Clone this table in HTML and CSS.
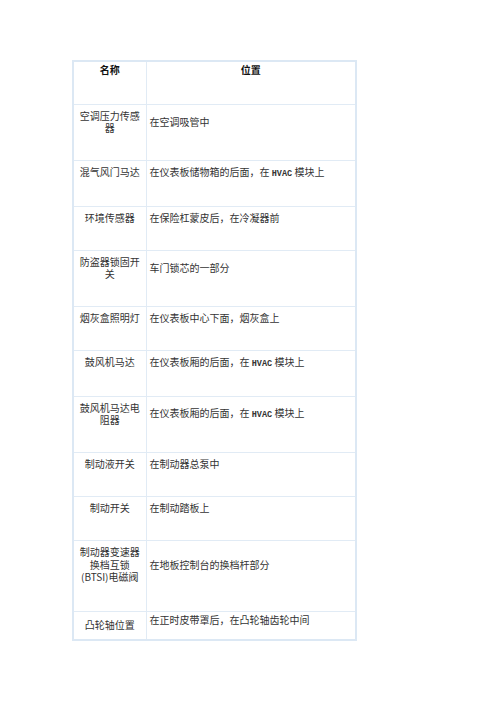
FILE: index.html
```html
<!DOCTYPE html>
<html lang="zh-CN">
<head>
<meta charset="utf-8">
<title>传感器位置</title>
<link rel="stylesheet" href="styles.css">
</head>
<body>
<table class="grid">
  <colgroup><col class="c-name"><col class="c-pos"></colgroup>
  <tr class="head">
    <th class="name">名称</th>
    <th class="pos">位置</th>
  </tr>
  <tr>
    <td class="name">空调压力传感器</td>
    <td class="pos">在空调吸管中</td>
  </tr>
  <tr>
    <td class="name">混气风门马达</td>
    <td class="pos">在仪表板储物箱的后面，在 <span class="lat">HVAC</span> 模块上</td>
  </tr>
  <tr>
    <td class="name">环境传感器</td>
    <td class="pos">在保险杠蒙皮后，在冷凝器前</td>
  </tr>
  <tr>
    <td class="name">防盗器锁固开关</td>
    <td class="pos">车门锁芯的一部分</td>
  </tr>
  <tr>
    <td class="name">烟灰盒照明灯</td>
    <td class="pos">在仪表板中心下面，烟灰盒上</td>
  </tr>
  <tr>
    <td class="name">鼓风机马达</td>
    <td class="pos">在仪表板厢的后面，在 <span class="lat">HVAC</span> 模块上</td>
  </tr>
  <tr>
    <td class="name">鼓风机马达电阻器</td>
    <td class="pos">在仪表板厢的后面，在 <span class="lat">HVAC</span> 模块上</td>
  </tr>
  <tr>
    <td class="name">制动液开关</td>
    <td class="pos">在制动器总泵中</td>
  </tr>
  <tr>
    <td class="name">制动开关</td>
    <td class="pos">在制动踏板上</td>
  </tr>
  <tr>
    <td class="name multi">制动器变速器
换档互锁
(BTSI)电磁阀</td>
    <td class="pos">在地板控制台的换档杆部分</td>
  </tr>
  <tr class="last">
    <td class="name">凸轮轴位置</td>
    <td class="pos">在正时皮带罩后，在凸轮轴齿轮中间</td>
  </tr>
</table>
</body>
</html>
```
FILE: styles.css
```css
html, body {
  margin: 0;
  padding: 0;
  background: #ffffff;
}

body {
  padding: 60px 0 0 72px;
  font-family: "Noto Sans CJK SC", "Noto Sans", sans-serif;
  font-size: 10px;
  line-height: 12px;
  color: #333333;
}

.grid {
  border-collapse: collapse;
  border: 2px solid #dce8f4;
  width: 283px;
  table-layout: fixed;
}

.c-name { width: 73px; }
.c-pos { width: 210px; }

.grid th,
.grid td {
  border: 1px solid #e1ebf5;
  padding: 5px 3px 26px;
}

.grid td.name {
  text-align: center;
  vertical-align: top;
}

.grid td.pos {
  text-align: left;
  vertical-align: middle;
}

.grid td.multi {
  white-space: pre-line;
  line-height: 12.5px;
  padding-bottom: 27px;
}

.head th {
  font-weight: 700;
  color: #111111;
  vertical-align: top;
  padding: 2px 3px 28px;
  text-align: center;
}

.last td {
  height: 29px;
  padding: 0 3px;
  box-sizing: border-box;
}

.last td.name {
  vertical-align: middle;
}

.last td.pos {
  vertical-align: top;
  padding-top: 2px;
}

.lat {
  font-family: "Liberation Mono", "DejaVu Sans Mono", monospace;
  font-weight: 700;
  font-size: 8.5px;
  line-height: 12px;
}
```
